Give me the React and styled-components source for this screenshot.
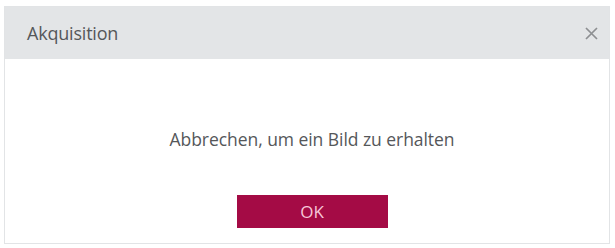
import React from "react";
import styled, { createGlobalStyle } from "styled-components";

const Global = createGlobalStyle`
  body {
    margin: 0;
    background: #ffffff;
    font-family: "Open Sans", "Noto Sans", sans-serif;
  }
`;

const Page = styled.div`
  width: 615px;
  height: 248px;
  padding: 6px 5px 4px 4px;
  box-sizing: border-box;
`;

const Dialog = styled.div`
  height: 100%;
  border: 1px solid #e2e4e6;
  box-sizing: border-box;
  display: flex;
  flex-direction: column;
  background: #ffffff;
`;

const TitleBar = styled.div`
  height: 52px;
  background: #e3e5e7;
  display: flex;
  align-items: center;
  justify-content: space-between;
  padding: 0 8px 0 22px;
  flex-shrink: 0;
`;

const Title = styled.span`
  font-size: 18px;
  color: #55575a;
  letter-spacing: -0.2px;
`;

const Close = styled.button`
  border: 0;
  background: none;
  padding: 0;
  width: 20px;
  height: 20px;
  display: flex;
  align-items: center;
  justify-content: center;
`;

const Body = styled.div`
  flex: 1;
  display: flex;
  flex-direction: column;
  align-items: center;
  padding: 68px 0 0 10px;
`;

const Message = styled.p`
  margin: 0;
  font-size: 17.5px;
  color: #55575a;
  letter-spacing: -0.05px;
`;

const OkButton = styled.button`
  margin-top: 44px;
  width: 151px;
  height: 33px;
  border: 0;
  background: #a40b45;
  color: #f7c6d8;
  font-family: inherit;
  font-size: 17px;
`;

export default function App() {
  return (
    <Page>
      <Global />
      <Dialog>
        <TitleBar>
          <Title>Akquisition</Title>
          <Close aria-label="Schließen">
            <svg width="13" height="13" viewBox="0 0 13 13">
              <path d="M1 1 L12 12 M12 1 L1 12" stroke="#8d8f92" strokeWidth="1.7" />
            </svg>
          </Close>
        </TitleBar>
        <Body>
          <Message>Abbrechen, um ein Bild zu erhalten</Message>
          <OkButton>OK</OkButton>
        </Body>
      </Dialog>
    </Page>
  );
}
